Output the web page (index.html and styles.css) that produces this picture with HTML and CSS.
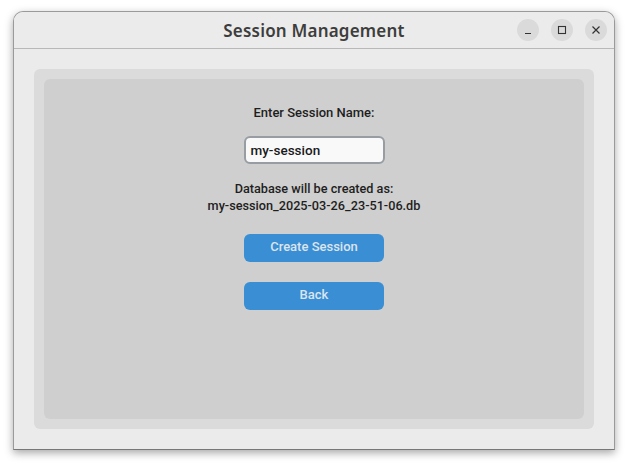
FILE: index.html
```html
<!DOCTYPE html>
<html>
<head>
<meta charset="utf-8">
<link rel="stylesheet" href="styles.css">
</head>
<body>
<div class="window">
  <div class="titlebar">
    <div class="title">Session Management</div>
    <div class="controls">
      <span class="ctl"><svg width="10" height="10" viewBox="0 0 10 10"><path d="M2 8.5h6" stroke="#333" stroke-width="1.2"/></svg></span>
      <span class="ctl"><svg width="10" height="10" viewBox="0 0 10 10"><rect x="1.5" y="1.5" width="7" height="7" fill="none" stroke="#333" stroke-width="1.1"/></svg></span>
      <span class="ctl"><svg width="10" height="10" viewBox="0 0 10 10"><path d="M1.5 1.5l7 7M8.5 1.5l-7 7" stroke="#333" stroke-width="1.2"/></svg></span>
    </div>
  </div>
  <div class="content">
    <div class="outer">
      <div class="inner">
        <div class="label">Enter Session Name:</div>
        <div class="entry">my-session</div>
        <div class="info">Database will be created as:<br>my-session_2025-03-26_23-51-06.db</div>
        <button class="btn first">Create Session</button>
        <button class="btn second">Back</button>
      </div>
    </div>
  </div>
</div>
</body>
</html>
```

FILE: styles.css
```css
html, body {
  margin: 0;
  padding: 0;
  background: #ffffff;
  width: 628px;
  height: 466px;
  overflow: hidden;
}
.window {
  margin: 11px 0 0 13px;
  width: 600px;
  height: 437px;
  border: 1px solid #9a9a9a;
  border-bottom-color: #777;
  border-radius: 10px 10px 0 0;
  background: #ebebeb;
  box-shadow: 0 3px 8px rgba(0,0,0,0.35);
  display: flex;
  flex-direction: column;
  overflow: hidden;
}
.titlebar {
  height: 36px;
  border-bottom: 1px solid #b8b8b8;
  background: #ebebeb;
  display: flex;
  align-items: center;
  justify-content: center;
  position: relative;
}
.title {
  font-family: "Noto Sans", "DejaVu Sans", sans-serif;
  font-weight: 600;
  font-size: 17px;
  color: #3d3d3d;
  letter-spacing: 0.2px;
}
.controls {
  position: absolute;
  right: 7px;
  top: 7px;
  display: flex;
  gap: 12px;
}
.ctl {
  width: 22px;
  height: 22px;
  border-radius: 50%;
  background: #dadada;
  display: flex;
  align-items: center;
  justify-content: center;
}
.content {
  flex: 1;
  padding: 20px;
  display: flex;
}
.outer {
  flex: 1;
  background: #dbdbdb;
  border-radius: 6px;
  padding: 10px;
  display: flex;
}
.inner {
  flex: 1;
  background: #cfcfcf;
  border-radius: 6px;
  display: flex;
  flex-direction: column;
  align-items: center;
  padding-top: 26px;
  font-family: Roboto, "Liberation Sans", sans-serif;
  font-weight: 500;
  font-size: 13px;
  color: #1e1e1e;
}
.label {
  line-height: 16px;
}
.entry {
  margin-top: 15px;
  width: 132px;
  height: 24px;
  border: 2px solid #979da2;
  border-radius: 6px;
  background: #f9f9fa;
  line-height: 24px;
  padding-left: 5px;
  font-size: 13.5px;
  font-weight: 500;
  color: #1a1a1a;
}
.info {
  margin-top: 16px;
  text-align: center;
  line-height: 17px;
  font-size: 12.7px;
}
.btn {
  width: 140px;
  height: 28px;
  border: none;
  border-radius: 6px;
  background: #3a8ed4;
  color: #dce4ee;
  font-family: Roboto, "Liberation Sans", sans-serif;
  font-weight: 500;
  font-size: 13px;
  padding: 0 0 3px 0;
}
.first { margin-top: 20px; }
.second { margin-top: 20px; }
```
